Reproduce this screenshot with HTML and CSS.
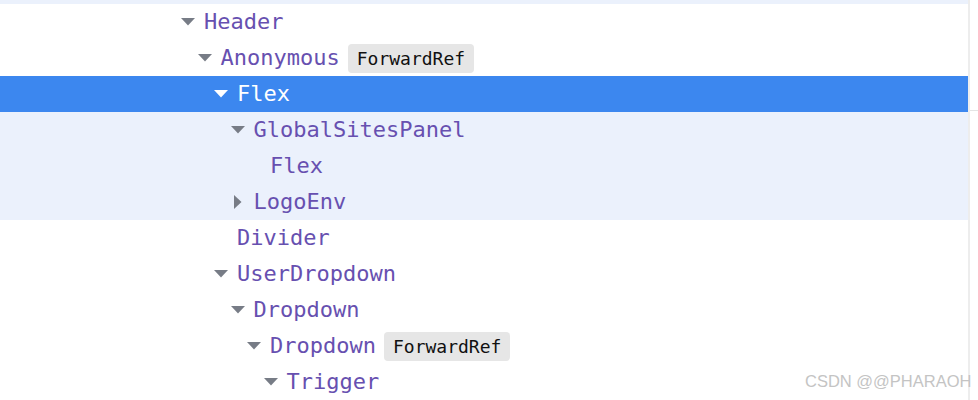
FILE: index.html
```html
<!DOCTYPE html>
<html>
<head>
<meta charset="utf-8">
<link rel="stylesheet" href="styles.css">
</head>
<body>
<div class="panel">
  <div class="tree">
    <div class="strip"></div>
    <div class="row d0"><svg class="arrow" viewBox="0 0 14 8"><polygon points="0,0 14,0 7,7.5"/></svg><span class="name">Header</span></div>
    <div class="row d1"><svg class="arrow" viewBox="0 0 14 8"><polygon points="0,0 14,0 7,7.5"/></svg><span class="name">Anonymous</span><span class="badge">ForwardRef</span></div>
    <div class="row d2 selected"><svg class="arrow" viewBox="0 0 14 8"><polygon points="0,0 14,0 7,7.5"/></svg><span class="name">Flex</span></div>
    <div class="row d3 sub"><svg class="arrow" viewBox="0 0 14 8"><polygon points="0,0 14,0 7,7.5"/></svg><span class="name">GlobalSitesPanel</span></div>
    <div class="row d4 sub"><span class="spacer"></span><span class="name">Flex</span></div>
    <div class="row d3 sub"><svg class="arrow right" viewBox="0 0 14 14"><polygon points="3,0 10.5,7 3,14"/></svg><span class="name">LogoEnv</span></div>
    <div class="row d2"><span class="spacer"></span><span class="name">Divider</span></div>
    <div class="row d2"><svg class="arrow" viewBox="0 0 14 8"><polygon points="0,0 14,0 7,7.5"/></svg><span class="name">UserDropdown</span></div>
    <div class="row d3"><svg class="arrow" viewBox="0 0 14 8"><polygon points="0,0 14,0 7,7.5"/></svg><span class="name">Dropdown</span></div>
    <div class="row d4"><svg class="arrow" viewBox="0 0 14 8"><polygon points="0,0 14,0 7,7.5"/></svg><span class="name">Dropdown</span><span class="badge">ForwardRef</span></div>
    <div class="row d5"><svg class="arrow" viewBox="0 0 14 8"><polygon points="0,0 14,0 7,7.5"/></svg><span class="name">Trigger</span></div>
  </div>
  <div class="scrollbar"><div class="thumb"></div></div>
  <div class="watermark">CSDN @@PHARAOH</div>
</div>
</body>
</html>
```

FILE: styles.css
```css
html, body {
  margin: 0;
  padding: 0;
  background: #ffffff;
}
.panel {
  position: relative;
  display: flex;
  width: 978px;
  height: 400px;
  overflow: hidden;
}
.tree {
  width: 968px;
  flex: none;
  display: flex;
  flex-direction: column;
}
.strip {
  height: 4px;
  background: #ebf1fc;
  flex: none;
}
.row {
  height: 36px;
  flex: none;
  display: flex;
  align-items: center;
  box-sizing: border-box;
  font-family: "DejaVu Sans Mono", monospace;
  font-size: 22px;
  color: #6750b0;
  white-space: nowrap;
}
.d0 { padding-left: 181px; }
.d1 { padding-left: 197.5px; }
.d2 { padding-left: 214px; }
.d3 { padding-left: 230.5px; }
.d4 { padding-left: 247px; }
.d5 { padding-left: 263.5px; }
.arrow {
  width: 14px;
  height: 8px;
  margin-right: 9px;
  fill: #777c86;
  flex: none;
}
.arrow.right {
  height: 14px;
}
.spacer {
  width: 14px;
  margin-right: 9px;
  flex: none;
}
.name {
  line-height: 36px;
}
.selected {
  background: #3c87ef;
  color: #ffffff;
}
.selected .arrow {
  fill: #ffffff;
}
.sub {
  background: #ebf1fc;
}
.badge {
  margin-left: 8px;
  height: 29px;
  line-height: 29px;
  padding: 0 9px;
  border-radius: 4px;
  background: #e6e6e6;
  color: #111111;
  font-size: 18px;
}
.scrollbar {
  flex: 1;
  border-left: 2px solid #ededed;
  background: #ffffff;
}
.thumb {
  height: 110px;
  border-bottom: 1px solid #e4e4e4;
}
.watermark {
  position: absolute;
  left: 805px;
  top: 372px;
  font-family: "Liberation Sans", Arial, sans-serif;
  font-size: 16.5px;
  color: #c4c4c4;
  text-shadow: 0 0 1px #ffffff;
}
```
